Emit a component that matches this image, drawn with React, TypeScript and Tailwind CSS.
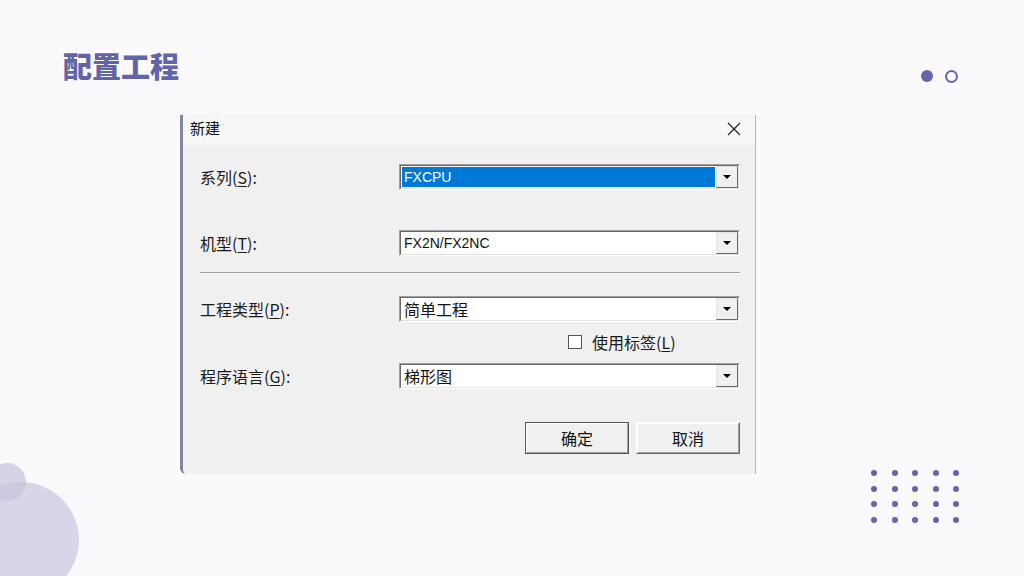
import React from 'react';

const cjk = { fontFamily: '"Noto Sans CJK SC", "Noto Sans", sans-serif' };
const latin = { fontFamily: '"Liberation Sans", "Noto Sans CJK SC", sans-serif' };

function Hot({ k }: { k: string }) {
  return (
    <span>
      (<span className="underline underline-offset-2">{k}</span>)
    </span>
  );
}

function Combo({ value, selected = false, cjkText = false }: { value: string; selected?: boolean; cjkText?: boolean }) {
  return (
    <div className="w-[341px] h-[26px] border-t border-l border-[#a0a0a0] border-r border-b border-r-white border-b-white">
      <div className="h-full flex border-t border-l border-[#696969] border-r border-b border-r-[#e3e3e3] border-b-[#e3e3e3] bg-white">
        <div className="flex-1 flex items-center p-[1px]">
          <div
            className={
              selected
                ? 'h-full w-full flex items-center bg-[#0078d7] text-white pl-[2px] text-[14px]'
                : cjkText
                ? 'h-full w-full flex items-center text-[#111] pl-[2px] text-[16px]'
                : 'h-full w-full flex items-center text-[#111] pl-[2px] text-[14px]'
            }
            style={cjkText ? cjk : latin}
          >
            {value}
          </div>
        </div>
        <div className="w-[22px] h-full flex items-center justify-center bg-[#f0f0f0] border-t border-l border-[#e3e3e3] border-r border-b border-r-[#696969] border-b-[#696969]">
          <svg width="8" height="4" viewBox="0 0 8 4">
            <path d="M0 0h8L4 4z" fill="#000" />
          </svg>
        </div>
      </div>
    </div>
  );
}

function Button({ label, primary = false }: { label: string; primary?: boolean }) {
  return (
    <div
      className={
        primary
          ? 'w-[104px] h-[32px] border border-[#555] bg-[#f0f0f0]'
          : 'w-[104px] h-[32px] border-t border-l border-white border-r border-b border-r-[#696969] border-b-[#696969] bg-[#f0f0f0]'
      }
    >
      <div className="h-full flex items-center justify-center border-t border-l border-white border-r border-b border-r-[#a0a0a0] border-b-[#a0a0a0] text-[16px] text-[#111]" style={cjk}>
        {label}
      </div>
    </div>
  );
}

function Row({ label, k, children }: { label: string; k: string; children: React.ReactNode }) {
  return (
    <div className="flex items-center">
      <div className="w-[199px] text-[16px] text-[#1a1a1a]" style={cjk}>
        {label}
        <Hot k={k} />:
      </div>
      {children}
    </div>
  );
}

export default function App() {
  return (
    <div className="relative w-full h-[576px] overflow-hidden bg-[#fbf9fb]">
      {/* decorations */}
      <div className="absolute left-[-37px] top-[482px] w-[116px] h-[116px] rounded-full bg-[#d8d5e8]" />
      <div className="absolute left-[-12px] top-[463px] w-[38px] h-[38px] rounded-full bg-[#c6c3dd]/70" />
      <div className="absolute left-[921px] top-[70px] w-[12px] h-[12px] rounded-full bg-[#6466ad]" />
      <div className="absolute left-[945px] top-[70px] w-[13px] h-[13px] rounded-full border-[2.5px] border-[#6466ad]" />
      <div className="absolute left-[871px] top-[470px] grid grid-cols-5 gap-x-[14.5px] gap-y-[9.5px]">
        {Array.from({ length: 20 }).map((_, i) => (
          <div key={i} className="w-[6px] h-[6px] rounded-full bg-[#6466ad]" />
        ))}
      </div>

      <div className="relative flex flex-col">
        <h1 className="pl-[63px] pt-[45px] text-[29px] leading-[40px] font-black text-[#6264a8]" style={cjk}>
          配置工程
        </h1>

        <div className="ml-[180px] mt-[30px] w-[576px] h-[359px] flex flex-col border-l-[3px] border-l-[#868499] border-r border-r-[#b4b4b4] rounded-bl-[6px] overflow-hidden">
          <div className="h-[30px] flex items-center justify-between bg-[#f7f7f7] pl-[7px] pr-[14px]">
            <span className="text-[15px] text-[#111] -mt-[3px]" style={cjk}>新建</span>
            <svg width="14" height="14" viewBox="0 0 14 14" className="-mt-[3px]">
              <path d="M1 1l12 12M13 1L1 13" stroke="#222" strokeWidth="1.2" />
            </svg>
          </div>

          <div className="flex-1 bg-[#f0f0f0] pl-[17px] pt-[19px]">
            <Row label="系列" k="S">
              <Combo value="FXCPU" selected />
            </Row>
            <div className="mt-[40px]">
              <Row label="机型" k="T">
                <Combo value="FX2N/FX2NC" />
              </Row>
            </div>
            <div className="mt-[16px] w-[540px] border-t border-t-[#a0a0a0] border-b border-b-white" />
            <div className="mt-[22px]">
              <Row label="工程类型" k="P">
                <Combo value="简单工程" cjkText />
              </Row>
            </div>
            <div className="mt-[12px] h-[16px] flex items-center pl-[368px]">
              <div className="w-[14px] h-[14px] bg-white border border-[#555]" />
              <span className="ml-[10px] text-[16px] text-[#1a1a1a]" style={cjk}>
                使用标签<Hot k="L" />
              </span>
            </div>
            <div className="mt-[13px]">
              <Row label="程序语言" k="G">
                <Combo value="梯形图" cjkText />
              </Row>
            </div>
            <div className="mt-[33px] flex gap-[7px] pl-[325px]">
              <Button label="确定" primary />
              <Button label="取消" />
            </div>
          </div>
        </div>
      </div>
    </div>
  );
}
